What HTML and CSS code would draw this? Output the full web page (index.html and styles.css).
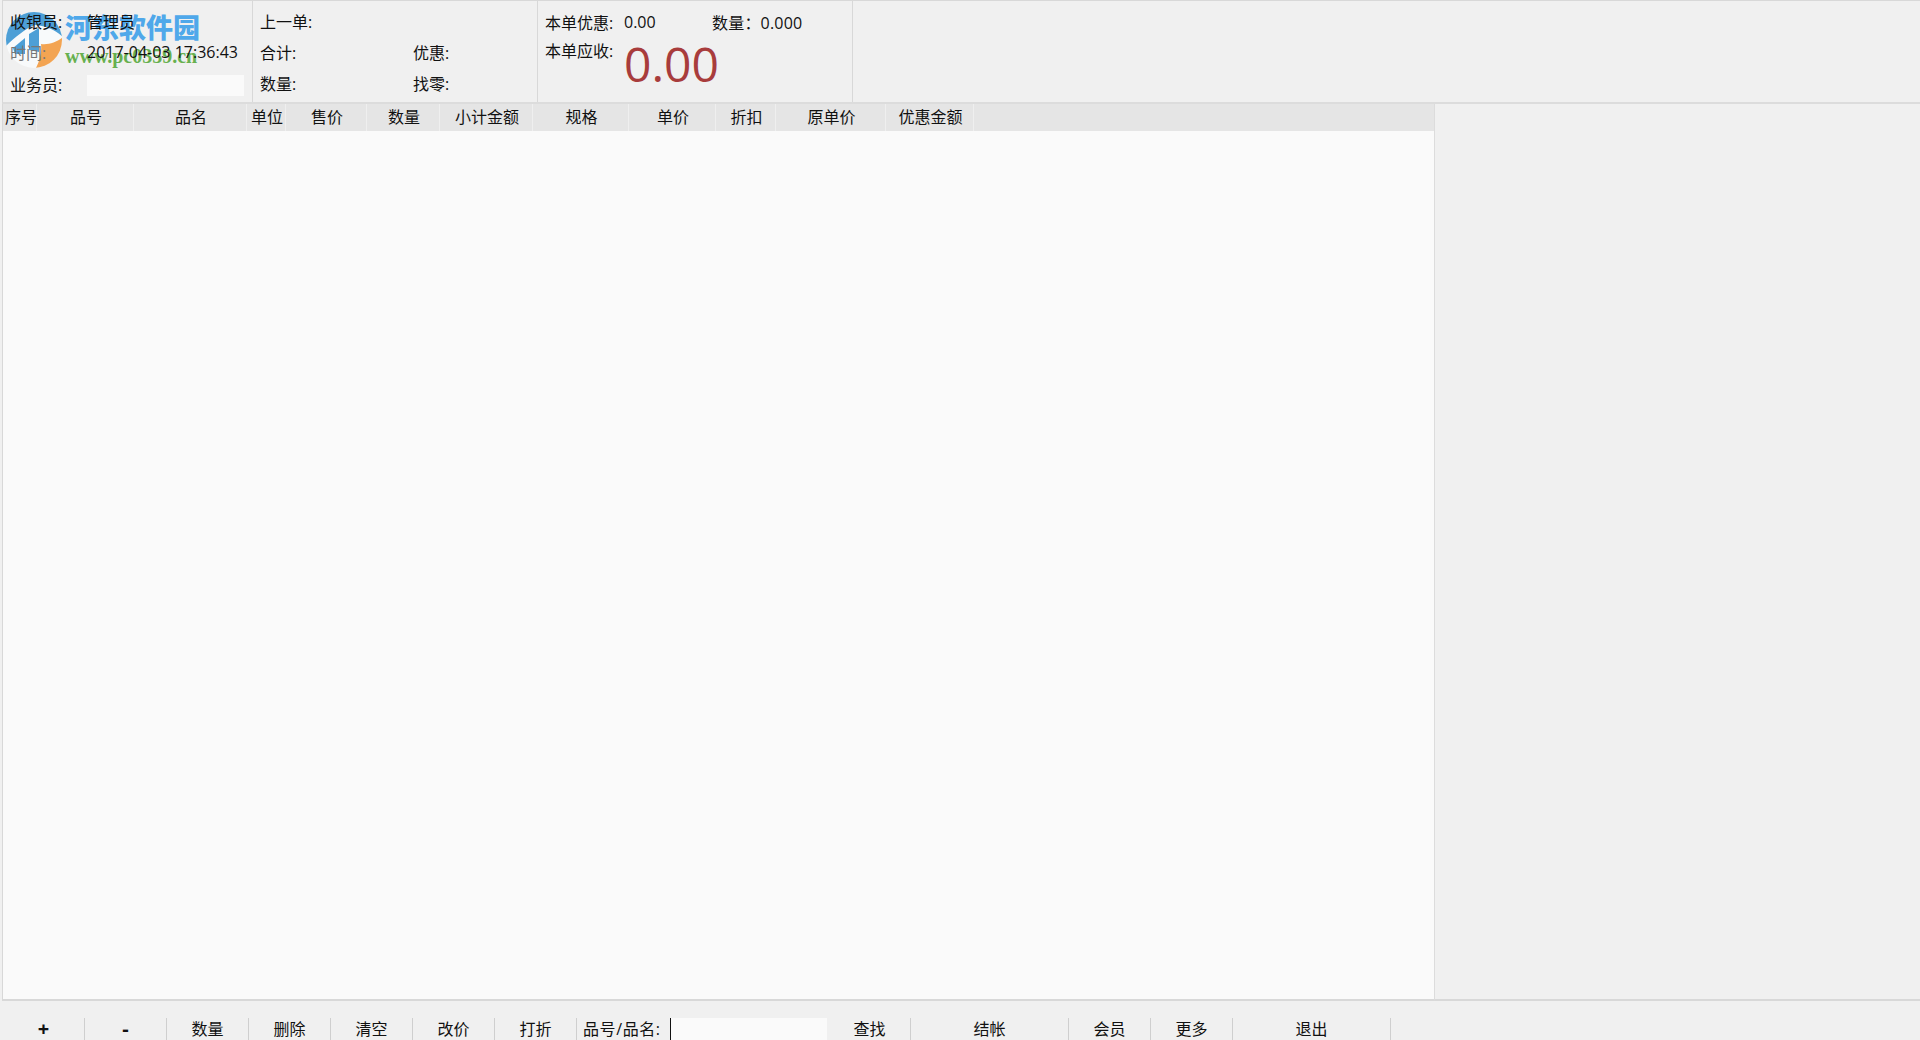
FILE: index.html
```html
<!DOCTYPE html>
<html lang="zh-CN">
<head>
    <meta charset="UTF-8">
    <title>收银</title>
    <link rel="stylesheet" href="styles.css">
</head>
<body>
    <!-- site stamp, sits under the cashier text -->
    <div class="stamp">
        <svg class="stamp-logo" width="58" height="56" viewBox="0 0 58 56">
            <defs>
                <clipPath id="disc"><circle cx="29" cy="28" r="28"/></clipPath>
            </defs>
            <g clip-path="url(#disc)">
                <rect width="58" height="56" fill="#f8fafb"/>
                <path d="M0 0 H58 V25 C50 18 42 14 30 13 C20 17 10 25 0 35 Z" fill="#4d9fd6"/>
                <path d="M8 36 L20 26 L20 42 L10 42 Z" fill="#4d9fd6"/>
                <path d="M24 22 L34 16 L34 40 L24 38 Z" fill="#4d9fd6"/>
                <path d="M36 32 C44 33 52 30 58 25 L58 40 L42 56 L31 56 C35 48 37 40 36 32 Z" fill="#f3a452"/>
            </g>
        </svg>
        <div class="stamp-text">
            <div class="stamp-cn">河东软件园</div>
            <div class="stamp-url">www.pc0359.cn</div>
        </div>
    </div>

    <div class="window">
        <div class="topbar">
            <div class="panel info">
                <div class="row"><span class="lbl">收银员:</span><span>管理员</span></div>
                <div class="row"><span class="lbl faint">时间:</span><span>2017-04-03 17:36:43</span></div>
                <div class="row"><span class="lbl">业务员:</span><input class="field" type="text"></div>
            </div>
            <div class="panel totals">
                <div class="cell wide">上一单:</div>
                <div class="cell">合计:</div>
                <div class="cell">优惠:</div>
                <div class="cell">数量:</div>
                <div class="cell">找零:</div>
            </div>
            <div class="panel due">
                <div class="due-top">
                    <span class="due-lbl">本单优惠:</span><span class="due-val">0.00</span>
                    <span class="due-qty">数量：0.000</span>
                </div>
                <div class="due-main">
                    <span class="due-lbl">本单应收:</span><span class="big">0.00</span>
                </div>
            </div>
        </div>

        <div class="middle">
            <div class="list">
                <div class="thead">
                    <div class="th w-seq">序号</div>
                    <div class="th w-code">品号</div>
                    <div class="th w-name">品名</div>
                    <div class="th w-unit">单位</div>
                    <div class="th w-sale">售价</div>
                    <div class="th w-qty">数量</div>
                    <div class="th w-sub">小计金额</div>
                    <div class="th w-spec">规格</div>
                    <div class="th w-price">单价</div>
                    <div class="th w-disc">折扣</div>
                    <div class="th w-orig">原单价</div>
                    <div class="th w-off">优惠金额</div>
                </div>
                <div class="tbody"></div>
            </div>
            <div class="side"></div>
        </div>

        <div class="toolbar">
            <button class="btn w-82 sym">+</button>
            <button class="btn w-82 sym">-</button>
            <button class="btn w-82">数量</button>
            <button class="btn w-82">删除</button>
            <button class="btn w-82">清空</button>
            <button class="btn w-82">改价</button>
            <button class="btn w-82">打折</button>
            <div class="search">
                <span class="search-lbl">品号/品名:</span>
                <input class="search-input" type="text">
            </div>
            <button class="btn w-82">查找</button>
            <button class="btn w-158">结帐</button>
            <button class="btn w-82">会员</button>
            <button class="btn w-82">更多</button>
            <button class="btn w-158">退出</button>
        </div>
    </div>
</body>
</html>
```

FILE: styles.css
```css
html, body {
    margin: 0;
    padding: 0;
    height: 100%;
    overflow: hidden;
}

body {
    position: relative;
    font-family: "Open Sans", "Noto Sans CJK SC", sans-serif;
    font-size: 16px;
    color: #111;
    background-color: #f0f0f0;
}

.window {
    position: relative;
    height: 1040px;
    display: flex;
    flex-direction: column;
    box-sizing: border-box;
    padding-left: 2px;
}

/* top information strip */
.topbar {
    height: 101px;
    flex-shrink: 0;
    display: flex;
    border-top: 1px solid #d8d8d8;
    border-bottom: 2px solid #dcdcdc;
    border-left: 1px solid #d8d8d8;
}

.panel {
    box-sizing: border-box;
    border-right: 1px solid #d8d8d8;
    height: 100%;
}

.info {
    width: 250px;
    padding: 4px 6px 0 7px;
}

.row {
    height: 31px;
    display: flex;
    align-items: center;
}

.lbl {
    width: 77px;
    flex-shrink: 0;
}

.faint {
    color: #777;
}

.field {
    width: 157px;
    height: 21px;
    margin-top: 4px;
    padding: 0;
    border: none;
    background-color: #fafafa;
}

.row:last-child {
    padding-top: 1px;
}

.totals {
    width: 285px;
    padding: 4px 0 0 7px;
    display: grid;
    grid-template-columns: 153px 1fr;
    grid-auto-rows: 31px;
    align-items: center;
}

.wide {
    grid-column: 1 / 3;
}

.due {
    width: 315px;
    padding: 5px 0 0 7px;
}

.due-top {
    height: 31px;
    display: flex;
    align-items: center;
}

.due-lbl {
    width: 79px;
}

.due-val {
    width: 88px;
}

.due-qty {
    letter-spacing: 0.2px;
}

.due-main {
    display: flex;
    align-items: flex-start;
    padding-top: 1px;
}

.big {
    font-size: 48px;
    line-height: 52px;
    color: #a83c3c;
}

/* goods table */
.middle {
    flex: 1;
    display: flex;
    min-height: 0;
}

.list {
    width: 1433px;
    box-sizing: border-box;
    display: flex;
    flex-direction: column;
    border-left: 1px solid #d8d8d8;
    border-right: 1px solid #dcdcdc;
    border-bottom: 2px solid #d8d8d8;
}

.thead {
    height: 27px;
    flex-shrink: 0;
    display: flex;
    background-color: #e5e5e5;
}

.th {
    box-sizing: border-box;
    padding-left: 2px;
    border-right: 1px solid #efefef;
    line-height: 26px;
    text-align: center;
    white-space: nowrap;
}

.w-seq { width: 34px; }
.w-code { width: 97px; }
.w-name { width: 113px; }
.w-unit { width: 39px; }
.w-sale { width: 81px; }
.w-qty { width: 73px; }
.w-sub { width: 93px; }
.w-spec { width: 96px; }
.w-price { width: 87px; }
.w-disc { width: 60px; }
.w-orig { width: 110px; }
.w-off { width: 88px; }

.tbody {
    flex: 1;
    background-color: #fafafa;
}

.side {
    flex: 1;
    border-bottom: 2px solid #d8d8d8;
}

/* bottom buttons */
.toolbar {
    height: 39px;
    flex-shrink: 0;
    display: flex;
    align-items: flex-end;
    padding-left: 1px;
}

.btn {
    height: 22px;
    padding: 0;
    border: none;
    border-right: 1px solid #cfcfcf;
    background: none;
    font-family: inherit;
    font-size: 16px;
    line-height: 22px;
    color: #111;
    box-sizing: border-box;
}

.w-82 { width: 82px; }
.w-158 { width: 158px; }

.sym {
    font-size: 20px;
    font-weight: 700;
}

.search {
    width: 252px;
    height: 22px;
    display: flex;
    padding-left: 6px;
    box-sizing: border-box;
    line-height: 22px;
}

.search-lbl {
    width: 87px;
    flex-shrink: 0;
    white-space: nowrap;
    letter-spacing: 0.6px;
}

.search-input {
    width: 157px;
    height: 22px;
    padding: 0;
    border: none;
    border-left: 1px solid #111;
    box-sizing: border-box;
    background-color: #fafafa;
}

/* stamp */
.stamp {
    position: absolute;
    left: 5px;
    top: 12px;
    display: flex;
}

.stamp-logo {
    flex-shrink: 0;
}

.stamp-text {
    margin-left: 2px;
}

.stamp-cn {
    font-family: "Noto Sans CJK SC", sans-serif;
    font-weight: 900;
    font-size: 27px;
    line-height: 30px;
    color: #4fa8ea;
}

.stamp-url {
    margin-top: 4px;
    font-family: "Liberation Serif", serif;
    font-weight: 700;
    font-size: 20px;
    line-height: 20px;
    color: #67b04f;
}
```
